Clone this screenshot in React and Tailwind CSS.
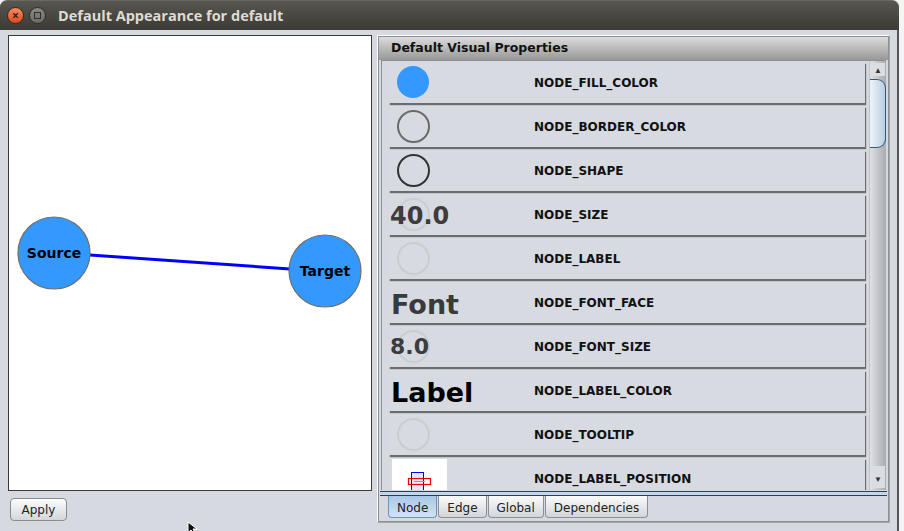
import React from "react";

const rows = [
  { label: "NODE_FILL_COLOR", icon: "fill" },
  { label: "NODE_BORDER_COLOR", icon: "border" },
  { label: "NODE_SHAPE", icon: "shape" },
  { label: "NODE_SIZE", icon: "size" },
  { label: "NODE_LABEL", icon: "faint" },
  { label: "NODE_FONT_FACE", icon: "font" },
  { label: "NODE_FONT_SIZE", icon: "fontsize" },
  { label: "NODE_LABEL_COLOR", icon: "labelcolor" },
  { label: "NODE_TOOLTIP", icon: "faint" },
  { label: "NODE_LABEL_POSITION", icon: "position" },
];

const dejavu = { fontFamily: '"DejaVu Sans", "Liberation Sans", sans-serif' };

const RowIcon = ({ icon }) => {
  if (icon === "fill")
    return <div className="absolute left-[8px] top-[4px] w-[32px] h-[32px] rounded-full bg-[#3399ff]" />;
  if (icon === "border")
    return <div className="absolute left-[8px] top-[4px] w-[33px] h-[33px] rounded-full border-2 border-[#6a6a6a]" />;
  if (icon === "shape")
    return <div className="absolute left-[8px] top-[4px] w-[33px] h-[33px] rounded-full border-2 border-[#333]" />;
  if (icon === "faint")
    return <div className="absolute left-[8px] top-[4px] w-[33px] h-[33px] rounded-full border-2 border-[#cacdd2]" />;
  if (icon === "size")
    return (
      <>
        <div className="absolute left-[8px] top-[4px] w-[33px] h-[33px] rounded-full border-2 border-[#cacdd2]" />
        <span className="absolute left-[1px] top-[7px] text-[24px] leading-[30px] font-bold text-[#3c3c3c]">40.0</span>
      </>
    );
  if (icon === "font")
    return <span className="absolute left-[2px] top-[6px] text-[27px] leading-[34px] font-bold text-[#3a3a3a]">Font</span>;
  if (icon === "fontsize")
    return (
      <>
        <div className="absolute left-[8px] top-[4px] w-[33px] h-[33px] rounded-full border-2 border-[#cacdd2]" />
        <span className="absolute left-[1px] top-[6px] text-[22px] leading-[30px] font-semibold text-[#3c3c3c]">8.0</span>
      </>
    );
  if (icon === "labelcolor")
    return <span className="absolute left-[2px] top-[6px] text-[27px] leading-[34px] font-bold text-black">Label</span>;
  if (icon === "position")
    return (
      <div className="absolute left-[3px] top-[1px] w-[55px] h-[44px] bg-white">
        <svg width="55" height="44" viewBox="0 0 55 44">
          <rect x="19.5" y="13.5" width="12" height="30" fill="#e6e6ff" stroke="#0000ee" strokeWidth="1" />
          <rect x="16.5" y="19.5" width="22" height="6" fill="none" stroke="#ee0000" strokeWidth="1.2" />
          <line x1="22" y1="22.5" x2="33" y2="22.5" stroke="#999" strokeWidth="1" />
        </svg>
      </div>
    );
  return null;
};

const Row = ({ label, icon }) => (
  <div
    className="relative h-[41px] w-[476px] mb-[3px] bg-[#d7dae0] shadow-[1px_2px_1px_rgba(0,0,0,0.5)] flex items-center shrink-0"
    style={dejavu}
  >
    <RowIcon icon={icon} />
    <span className="ml-[145px] text-[12px] font-bold text-[#111]">{label}</span>
  </div>
);

const Tab = ({ children, active }) => (
  <div
    className={
      active
        ? "h-[22px] px-[8px] pt-[2px] flex items-center rounded-b-[4px] border border-t-0 border-[#6f93bd] bg-linear-to-b from-[#a9c7e6] to-[#d3e3f3] text-[12px] text-[#222] mr-[1px]"
        : "h-[22px] px-[8px] pt-[2px] flex items-center rounded-b-[4px] border border-t-0 border-[#8d8f94] bg-linear-to-b from-[#fbfbfb] to-[#d3d5da] text-[12px] text-[#222] mr-[1px]"
    }
    style={dejavu}
  >
    {children}
  </div>
);

export default function App() {
  return (
    <div className="relative w-[904px] h-[531px] bg-[#f4f4f4] overflow-hidden">
      <div className="w-[899px] h-full flex flex-col">
        {/* Title bar */}
        <div className="h-[30px] shrink-0 rounded-t-[7px] bg-linear-to-b from-[#57564f] to-[#3b3a36] flex items-center border-t border-[#6a6964]">
          <div className="ml-[7px] w-[17px] h-[17px] rounded-full bg-linear-to-b from-[#f58a5c] to-[#dc4a16] border border-[#3a2a22] flex items-center justify-center text-[#3a1d10] text-[12px] font-bold leading-none">
            ×
          </div>
          <div className="ml-[5px] w-[17px] h-[17px] rounded-full bg-linear-to-b from-[#8a8984] to-[#6b6a65] border border-[#2e2d2a] flex items-center justify-center">
            <div className="w-[7px] h-[7px] border border-[#2f2e2b]" />
          </div>
          <span
            className="ml-[12px] text-[14.5px] font-bold text-[#dfdbd2]"
            style={{ fontFamily: '"Open Sans", "DejaVu Sans", sans-serif' }}
          >
            Default Appearance for default
          </span>
        </div>

        {/* Body */}
        <div className="flex-1 flex bg-[#d6d9df] border-r-2 border-[#55565a]">
          {/* Left: network preview */}
          <div className="pl-[8px] pt-[5px] flex flex-col">
            <div className="relative w-[364px] h-[456px] bg-white border border-[#3a3a3a]">
              <svg className="absolute left-0 top-0" width="362" height="454" viewBox="0 0 362 454">
                <line x1="81" y1="219" x2="281" y2="233" stroke="#0000ff" strokeWidth="3" />
                <circle cx="45" cy="217" r="36" fill="#3399ff" stroke="#6f6f6f" strokeWidth="1.2" />
                <circle cx="316" cy="235" r="36" fill="#3399ff" stroke="#6f6f6f" strokeWidth="1.2" />
                <text x="45" y="222" textAnchor="middle" fontSize="14" fontWeight="bold" fill="#000" style={dejavu}>
                  Source
                </text>
                <text x="316" y="240" textAnchor="middle" fontSize="14" fontWeight="bold" fill="#000" style={dejavu}>
                  Target
                </text>
              </svg>
            </div>
            <button
              className="mt-[7px] ml-[2px] w-[57px] h-[23px] rounded-[4px] border border-[#8a8c90] bg-linear-to-b from-[#fdfdfd] to-[#d4d6db] text-[12px] text-[#222] flex items-center justify-center"
              style={dejavu}
            >
              Apply
            </button>
          </div>

          {/* Right: visual properties */}
          <div className="ml-[5px] mt-[5px] w-[513px] h-[488px] border border-t-white border-l-white border-r-[#a3a6ab] border-b-[#a3a6ab]">
            <div className="h-full flex flex-col border border-[#8c8f94]">
              <div
                className="h-[23px] shrink-0 pl-[12px] flex items-center bg-linear-to-b from-[#dcdcdc] to-[#989898] text-[12.5px] font-bold text-[#111]"
                style={dejavu}
              >
                Default Visual Properties
              </div>
              <div className="h-[430px] shrink-0 ml-[2px] mr-[2px] flex border-t border-l border-[#8c8f94] bg-[#d6d9df]">
                <div className="flex-1 overflow-hidden pl-[7px] pt-[1px] flex flex-col">
                  {rows.map((r, i) => (
                    <Row key={i} label={r.label} icon={r.icon} />
                  ))}
                </div>
                {/* Scrollbar */}
                <div className="relative w-[17px] h-full bg-linear-to-r from-[#dfe1e5] to-[#a9abb0] border-l border-[#bfc2c7]">
                  <div className="absolute left-[1px] top-[2px] w-[14px] h-[13px] bg-[#dadde2] flex items-center justify-center text-[8px] text-[#333]">
                    ▲
                  </div>
                  <div className="absolute left-[0px] top-[18px] w-[16px] h-[69px] rounded-r-[9px] border border-l-0 border-[#3b566f] bg-linear-to-r from-[#eef4fa] to-[#b9cfe4]" />
                  <div className="absolute left-[1px] bottom-[2px] w-[14px] h-[22px] bg-[#dadde2] flex items-end justify-center pb-[3px] text-[8px] text-[#333]">
                    ▼
                  </div>
                </div>
              </div>
              {/* tab separator */}
              <div className="h-[5px] shrink-0 mt-[1px] mx-[1px] border-y border-[#2c3e52] bg-[#c3d6ec]" />
              <div className="flex pl-[9px]">
                <Tab active>Node</Tab>
                <Tab>Edge</Tab>
                <Tab>Global</Tab>
                <Tab>Dependencies</Tab>
              </div>
            </div>
          </div>
        </div>
      </div>

      {/* mouse pointer */}
      <svg className="absolute left-[187px] top-[521px]" width="14" height="14" viewBox="0 0 14 14">
        <path d="M1 1 L1 12 L4 9 L6.5 13 L8.5 12 L6 8 L10 8 Z" fill="#111" stroke="#fff" strokeWidth="1" />
      </svg>
    </div>
  );
}
